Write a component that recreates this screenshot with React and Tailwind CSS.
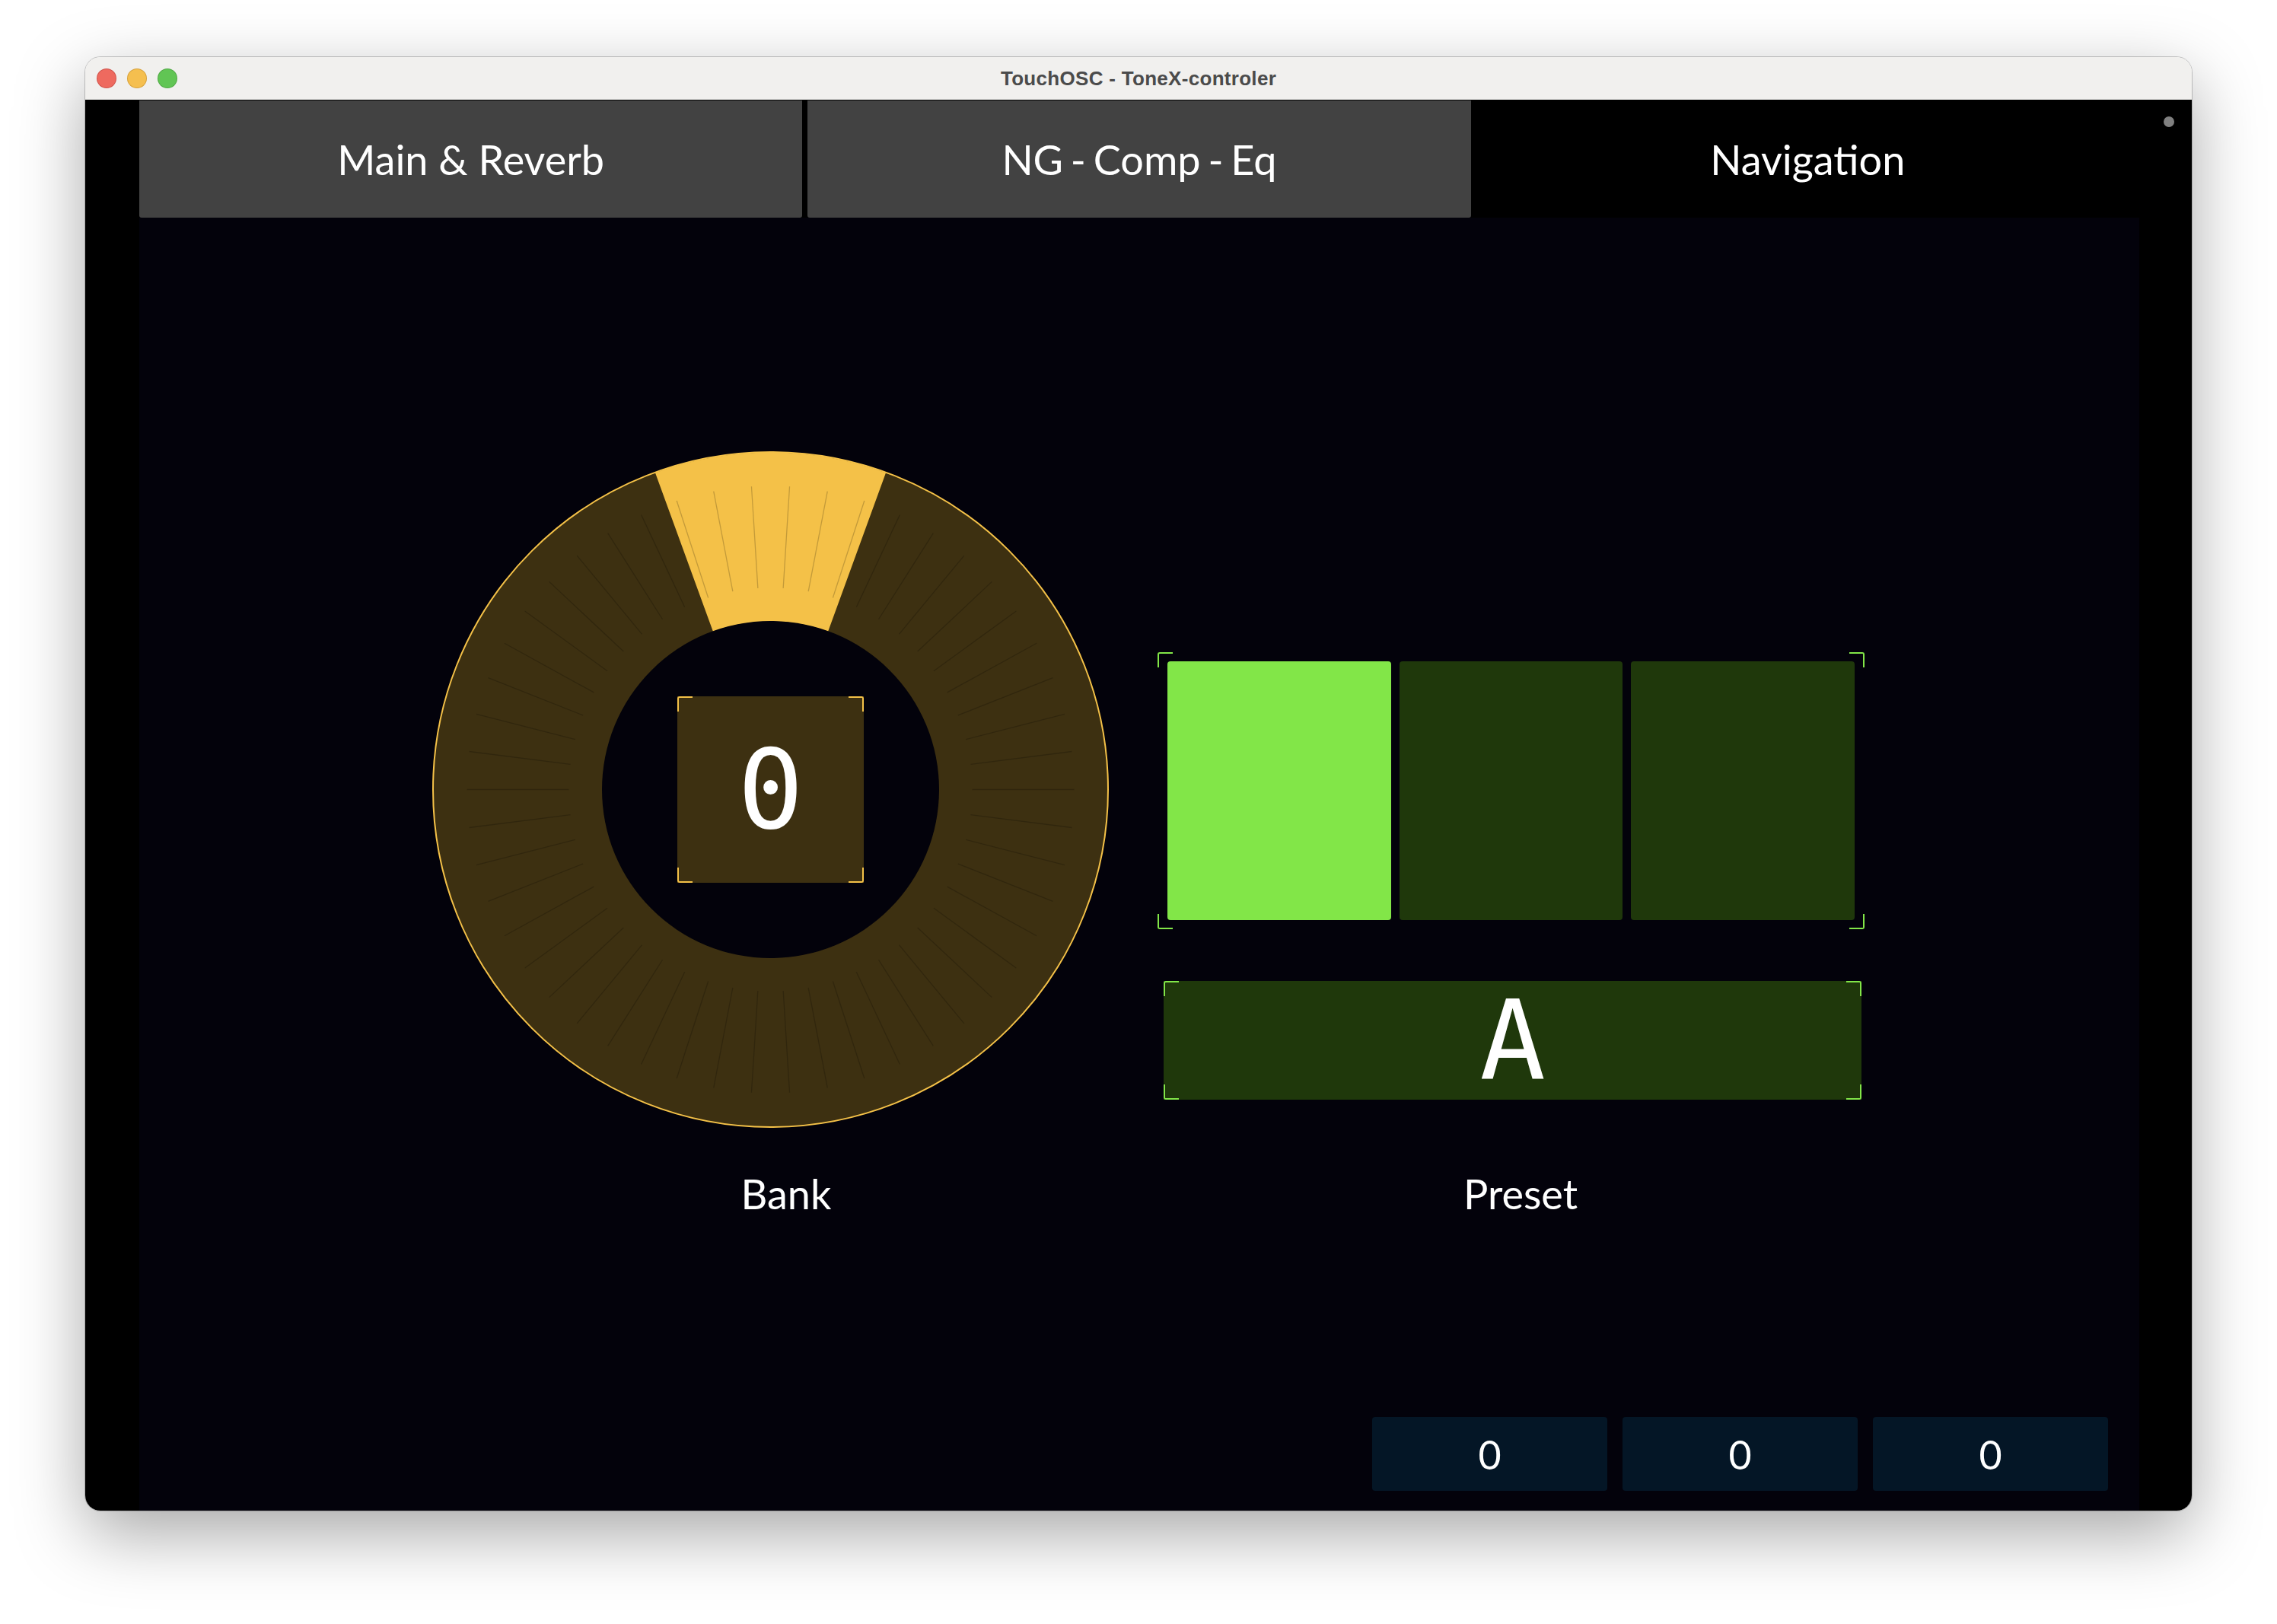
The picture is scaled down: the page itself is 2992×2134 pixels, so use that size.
import React from 'react';

const sans = { fontFamily: "Lato, 'Open Sans', sans-serif" };
const mono = { fontFamily: "'DejaVu Sans Mono', 'Liberation Mono', monospace" };

// corner brackets drawn over a control's edges
const Brackets = ({ tone }) => {
  const c = tone === 'yellow' ? 'border-[#f4c148]' : 'border-[#82e648]';
  return (
    <>
      <span className={`absolute top-0 left-0 w-5 h-5 border-t-2 border-l-2 rounded-tl-[3px] ${c}`} />
      <span className={`absolute top-0 right-0 w-5 h-5 border-t-2 border-r-2 rounded-tr-[3px] ${c}`} />
      <span className={`absolute bottom-0 left-0 w-5 h-5 border-b-2 border-l-2 rounded-bl-[3px] ${c}`} />
      <span className={`absolute bottom-0 right-0 w-5 h-5 border-b-2 border-r-2 rounded-br-[3px] ${c}`} />
    </>
  );
};

const BankKnob = ({ value = 0 }) => {
  const c = 444.5;
  const rad = (d) => (d * Math.PI) / 180;
  const pt = (r, a) => [c + r * Math.sin(rad(a)), c - r * Math.cos(rad(a))];
  const [ox1, oy1] = pt(443, -20);
  const [ox2, oy2] = pt(443, 20);
  const [ix2, iy2] = pt(221, 20);
  const [ix1, iy1] = pt(221, -20);
  const wedge = `M${ox1} ${oy1} A443 443 0 0 1 ${ox2} ${oy2} L${ix2} ${iy2} A221 221 0 0 0 ${ix1} ${iy1} Z`;
  const ticks = Array.from({ length: 50 }, (_, k) => 3.6 + 7.2 * k);

  return (
    <div className="relative w-[889px] h-[889px] shrink-0">
      <svg width="889" height="889" viewBox="0 0 889 889" className="block">
        <circle cx={c} cy={c} r="443.5" fill="#3d3011" />
        <path d={wedge} fill="#f4c148" />
        {ticks.map((a) => {
          const [x1, y1] = pt(265, a);
          const [x2, y2] = pt(399, a);
          return <line key={a} x1={x1} y1={y1} x2={x2} y2={y2} stroke="rgba(0,0,0,0.2)" strokeWidth="1.3" />;
        })}
        <circle cx={c} cy={c} r="443.5" fill="none" stroke="#f4c148" strokeWidth="2" />
        <circle cx={c} cy={c} r="221.5" fill="#03020b" />
      </svg>
      <div className="absolute inset-0 flex items-center justify-center">
        <div className="relative w-[245px] h-[245px] bg-[#3d3011] flex items-center justify-center">
          <Brackets tone="yellow" />
          <span className="text-white text-[144px] leading-none" style={mono}>{value}</span>
        </div>
      </div>
    </div>
  );
};

const tabs = [
  { label: 'Main & Reverb', active: false, extra: '' },
  { label: 'NG - Comp - Eq', active: false, extra: '[word-spacing:-4px]' },
  { label: 'Navigation', active: true, extra: '' },
];

export default function App() {
  return (
    <div className="w-[2992px] h-[2134px] bg-white pt-[75px] pl-[112px]" style={sans}>
      <div className="w-[2768px] h-[1910px] rounded-[20px] overflow-hidden flex flex-col shadow-[0_30px_90px_rgba(0,0,0,0.35)] ring-1 ring-black/20">
        {/* title bar */}
        <div className="h-[57px] bg-[#f1f0ee] grid grid-cols-[1fr_auto_1fr] items-center border-b border-black">
          <div className="flex gap-[16px] pl-[16px]">
            <span className="w-[24px] h-[24px] rounded-full bg-[#ee6a5f] ring-1 ring-[#d0524a]" />
            <span className="w-[24px] h-[24px] rounded-full bg-[#f5bf4f] ring-1 ring-[#d7a13b]" />
            <span className="w-[24px] h-[24px] rounded-full bg-[#61c554] ring-1 ring-[#4ea843]" />
          </div>
          <div className="text-[26px] tracking-[0.3px] font-bold text-[#4b4b4b]" style={{ fontFamily: "'Liberation Sans', Arial, sans-serif" }}>
            TouchOSC - ToneX-controler
          </div>
          <div />
        </div>

        {/* content */}
        <div className="flex-1 bg-black flex">
          <div className="w-[71px] shrink-0" />

          <div className="flex-1 flex flex-col">
            <div className="h-[154px] flex gap-[7px]">
              {tabs.map((t) => (
                <div
                  key={t.label}
                  className={`flex-1 flex items-center justify-center rounded-b-[3px] text-white text-[54px] ${t.extra} ${t.active ? 'bg-black' : 'bg-[#424242]'}`}
                >
                  {t.label}
                </div>
              ))}
            </div>

            <div className="flex-1 bg-[#03020b] flex flex-col">
              <div className="flex items-start pt-[307px] pl-[385px] gap-[64px]">
                <BankKnob value={0} />

                <div className="flex flex-col mt-[264px]">
                  <div className="relative w-[929px] h-[364px] px-[13px] py-[12px] flex gap-[11px]">
                    <Brackets tone="green" />
                    <div className="flex-1 rounded-[4px] bg-[#82e648]" />
                    <div className="flex-1 rounded-[4px] bg-[#1f380b]" />
                    <div className="flex-1 rounded-[4px] bg-[#1f380b]" />
                  </div>
                  <div className="relative ml-[8px] mt-[68px] w-[917px] h-[156px] bg-[#1f380b] flex items-center justify-center">
                    <Brackets tone="green" />
                    <span className="text-white text-[144px] leading-none" style={mono}>A</span>
                  </div>
                </div>
              </div>

              <div className="flex mt-[55px] text-white text-[54px] leading-[64px]">
                <div className="ml-[650px] w-[400px] text-center">Bank</div>
                <div className="ml-[565px] w-[400px] text-center">Preset</div>
              </div>

              <div className="mt-auto flex justify-end gap-[20px] pr-[41px] pb-[26px]">
                {[0, 0, 0].map((v, i) => (
                  <div key={i} className="w-[309px] h-[97px] rounded-[4px] bg-[#041626] flex items-center justify-center text-white text-[52px]">
                    {v}
                  </div>
                ))}
              </div>
            </div>
          </div>

          <div className="w-[69px] shrink-0 pt-[21px] pl-[32px]">
            <div className="w-[14px] h-[14px] rounded-full bg-[#808080]" />
          </div>
        </div>
      </div>
    </div>
  );
}
